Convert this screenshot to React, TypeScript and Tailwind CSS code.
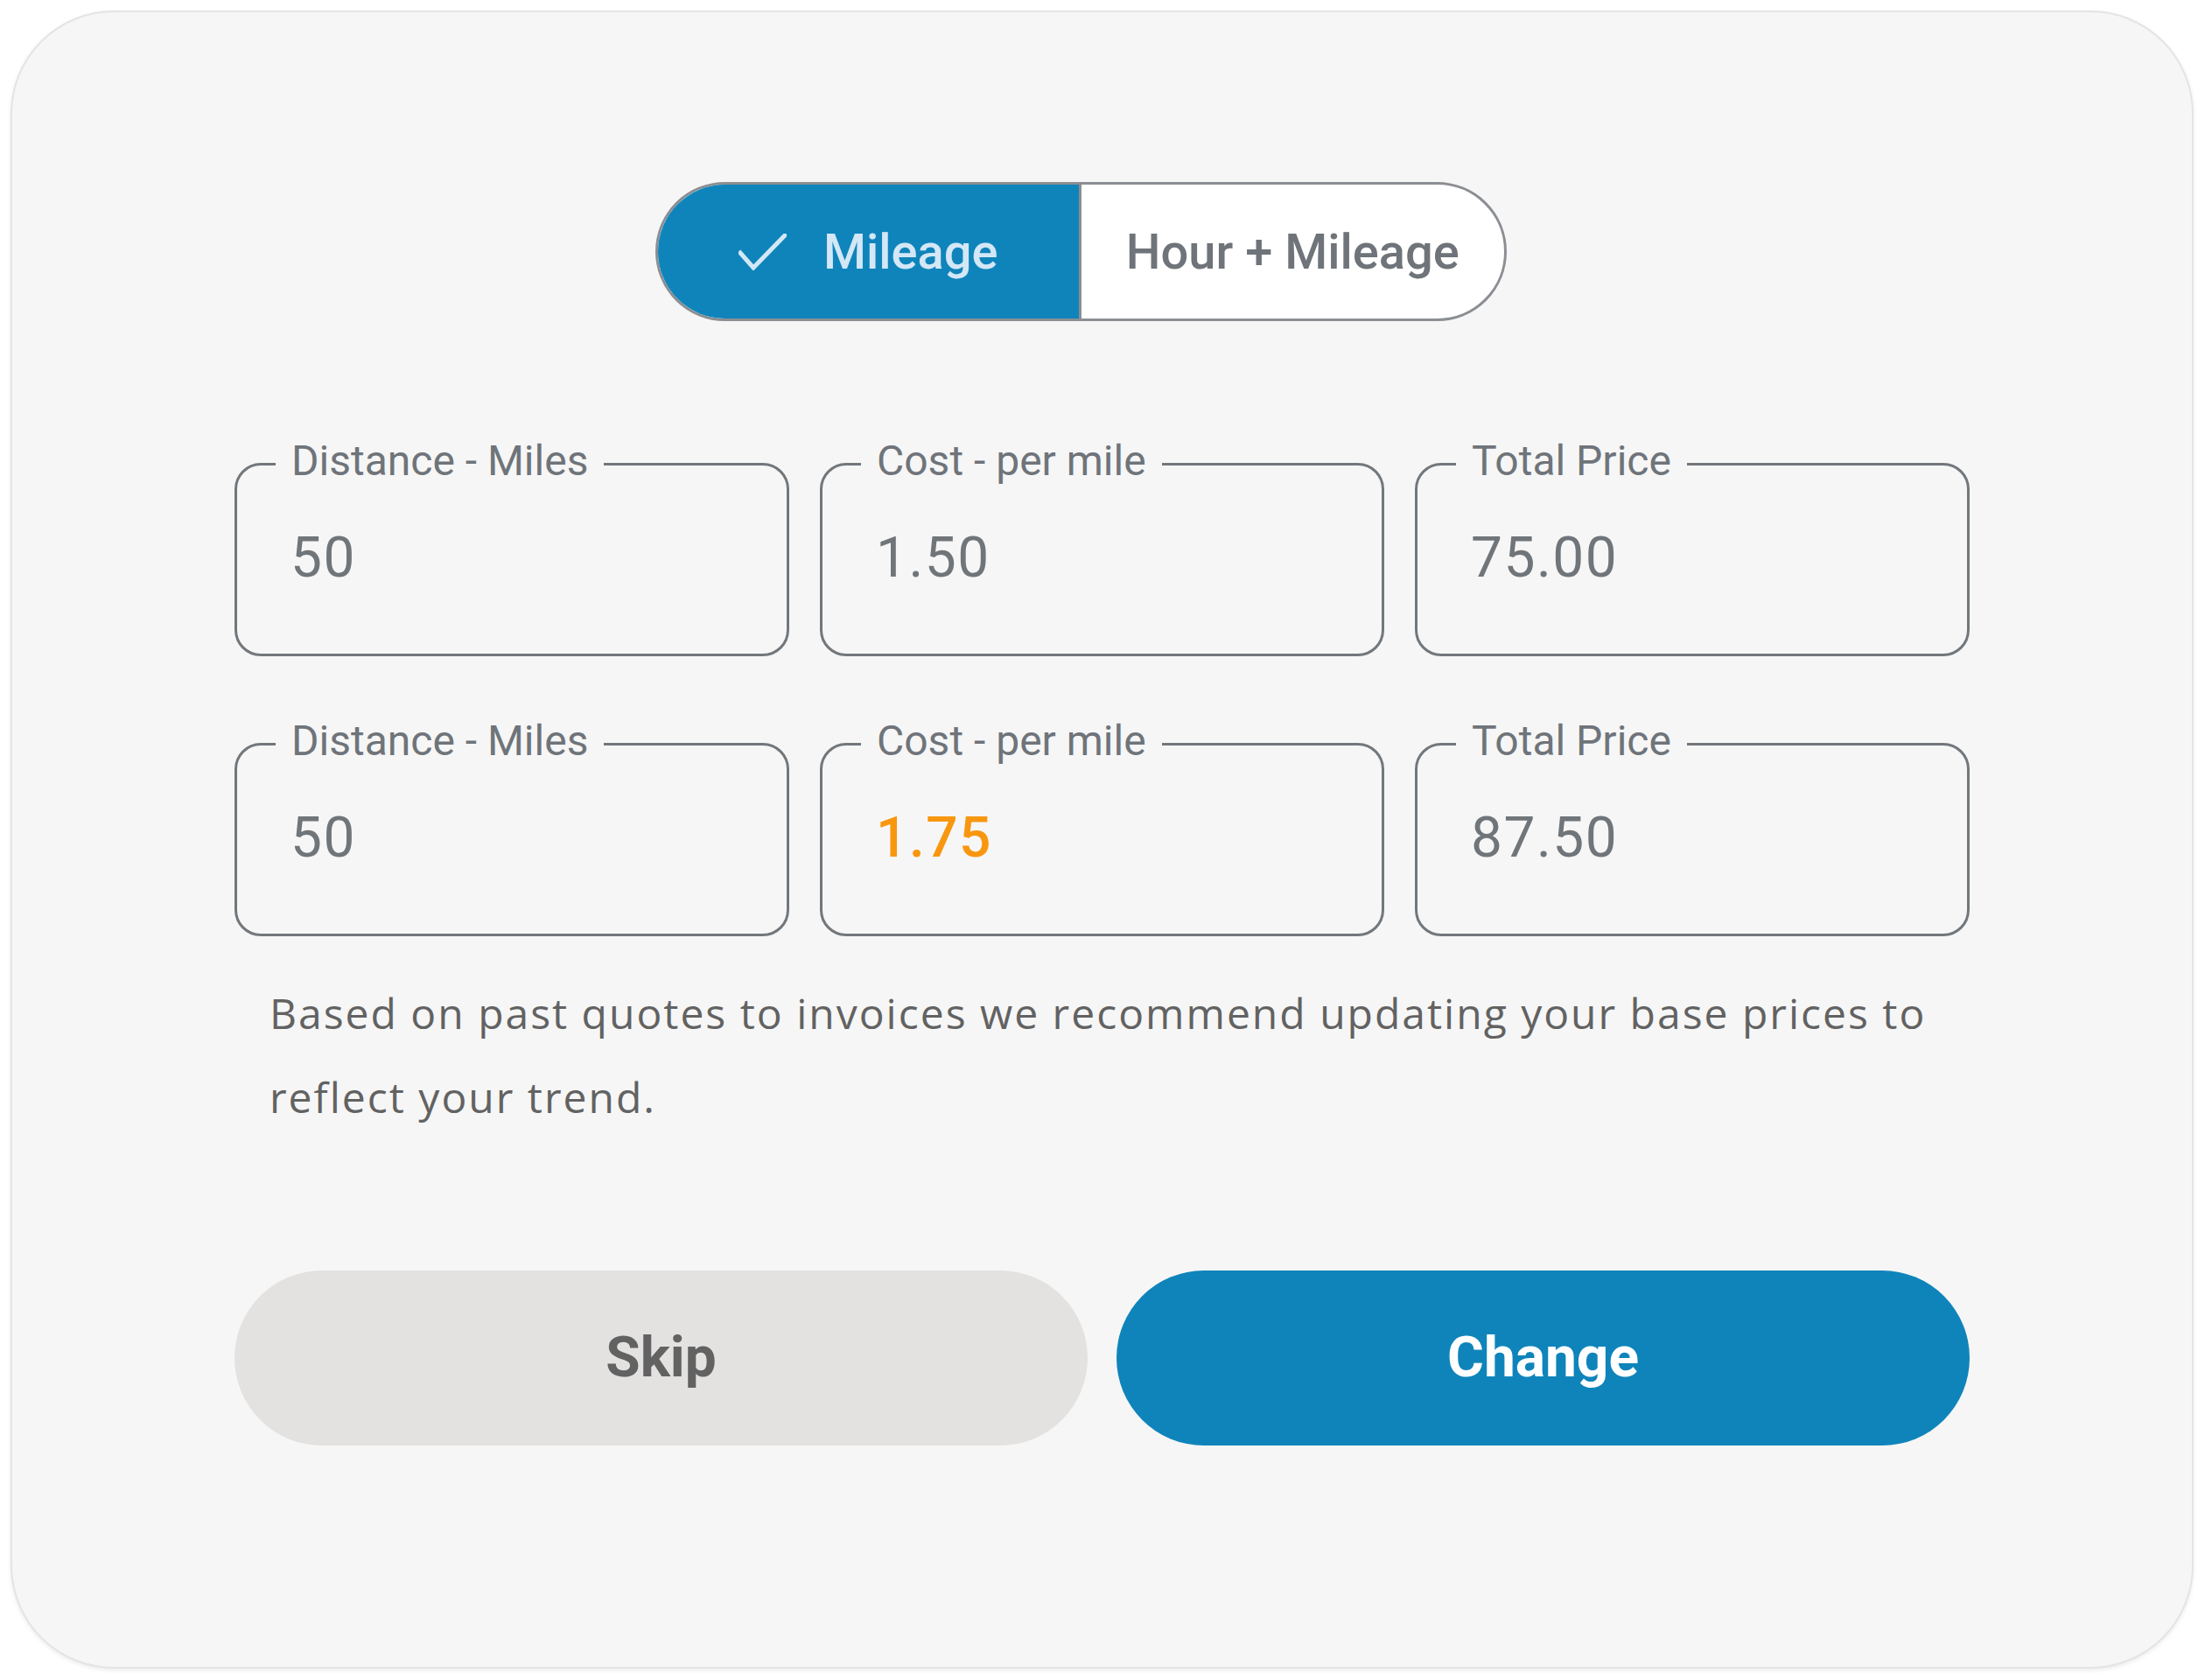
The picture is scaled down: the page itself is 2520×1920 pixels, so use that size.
import React from "react";

const fields = [
    [
        { label: "Distance - Miles", value: "50" },
        { label: "Cost - per mile", value: "1.50" },
        { label: "Total Price", value: "75.00" },
    ],
    [
        { label: "Distance - Miles", value: "50" },
        { label: "Cost - per mile", value: "1.75", highlight: true },
        { label: "Total Price", value: "87.50" },
    ],
];

function CheckIcon() {
    return (
        <svg width="55" height="42" viewBox="0 0 55 42" fill="none" className="shrink-0">
            <path d="M2 22 L17 39 L53 2" stroke="#d3e7f6" strokeWidth="5" strokeLinecap="square" strokeLinejoin="miter" />
        </svg>
    );
}

function OutlinedField({ label, value, highlight }: { label: string; value: string; highlight?: boolean }) {
    return (
        <fieldset className="h-[250px] rounded-[30px] border-[3px] border-[#72777c] px-[44px]">
            <legend className="px-[18px] pb-[7px] text-[48px] leading-[54px] text-[#6f747a]">{label}</legend>
            <div
                className={`mt-[45px] pl-[17px] text-[64px] leading-[64px] tracking-[1.5px] ${highlight ? "font-medium text-[#f8970f]" : "text-[#70757a]"}`}
            >
                {value}
            </div>
        </fieldset>
    );
}

export default function App() {
    return (
        <div className="w-[2520px] h-[1920px] bg-white p-[12px] font-['Roboto',sans-serif]">
            <div className="flex h-[1895px] w-[2495px] flex-col rounded-[118px] border-2 border-[#e4e4e4] bg-[#f6f6f6] px-[254px] pt-[194px] shadow-[0_2px_5px_rgba(0,0,0,0.08)]">
                {/* rate type toggle */}
                <div className="ml-[481px] flex h-[159px] w-[973px] self-start overflow-hidden rounded-full border-[3px] border-[#8b8e92] bg-white">
                    <div className="flex w-1/2 items-center justify-center gap-[42px] border-r-[3px] border-[#8b8e92] bg-[#0f84bb]">
                        <CheckIcon />
                        <span className="text-[56px] font-medium text-[#d3e7f6]">Mileage</span>
                    </div>
                    <div className="flex flex-1 items-center justify-center">
                        <span className="text-[56px] font-medium text-[#6f747a]">Hour + Mileage</span>
                    </div>
                </div>

                <div className="mt-[133px] flex flex-col gap-[70px]">
                    {fields.map((row, i) => (
                        <div key={i} className="grid grid-cols-[634px_645px_634px] gap-[35px]">
                            {row.map((f, j) => (
                                <OutlinedField key={j} label={f.label} value={f.value} highlight={f.highlight} />
                            ))}
                        </div>
                    ))}
                </div>

                <p className="mt-[40px] pl-[40px] font-['Open_Sans',sans-serif] text-[48px] leading-[96px] tracking-[2px] text-[#626262]">
                    Based on past quotes to invoices we recommend updating your base prices to
                    <br />
                    reflect your trend.
                </p>

                <div className="mt-[150px] grid grid-cols-2 gap-[33px]">
                    <button className="h-[200px] rounded-full bg-[#e3e2e0] text-[64px] font-bold text-[#626262]">Skip</button>
                    <button className="h-[200px] rounded-full bg-[#0f84bb] text-[64px] font-bold text-white">Change</button>
                </div>
            </div>
        </div>
    );
}
